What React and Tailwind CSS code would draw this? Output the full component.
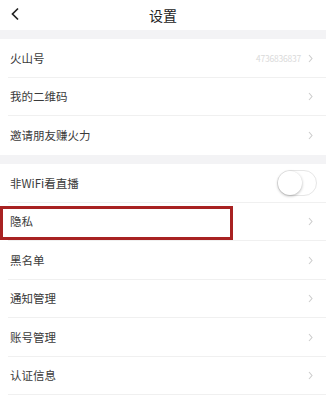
import React from "react";

const font = { fontFamily: '"Noto Sans CJK SC", "Noto Sans", sans-serif' };

const Chevron = () => (
  <svg width="5" height="9" viewBox="0 0 5 9" className="shrink-0">
    <path d="M1 1l3 3.5-3 3.5" fill="none" stroke="#cdcdcd" strokeWidth="1.1" />
  </svg>
);

const Row = ({ label, value, last, children, marked }) => (
  <div className="relative flex items-center h-[38.5px] pl-[10px] pr-[13px] bg-white">
    <span className="flex-1 text-[11.5px] text-[#3a3a3a]">{label}</span>
    {value && (
      <span className="mr-[7px] text-[8.5px] text-[#dadada] tracking-tight">{value}</span>
    )}
    {children || <Chevron />}
    {!last && <div className="absolute left-[8px] right-0 bottom-0 h-px bg-[#f0f0f0]" />}
    {marked && (
      <div className="absolute left-0 top-[3px] w-[233px] h-[34px] border-[3px] border-[#a82222]" />
    )}
  </div>
);

const Toggle = () => (
  <div className="relative w-[40px] h-[26px] rounded-full border border-[#e6e6e6] bg-white mr-[-4px]">
    <div className="absolute left-0 top-0 w-[24px] h-[24px] rounded-full bg-white shadow-[0_1px_3px_rgba(0,0,0,0.3)]" />
  </div>
);

const App = () => {
  return (
    <div className="w-[326px] h-[400px] overflow-hidden bg-white" style={font}>
      <div className="relative flex items-center justify-center h-[30px] bg-white">
        <svg width="10" height="14" viewBox="0 0 10 14" className="absolute left-[10px] top-[7px]">
          <path d="M8 1.5L2.5 7 8 12.5" fill="none" stroke="#222" strokeWidth="1.7" />
        </svg>
        <span className="text-[14px] text-[#222]">设置</span>
      </div>
      <div className="h-[9px] bg-[#f3f3f5]" />
      <Row label="火山号" value="4736836837" />
      <Row label="我的二维码" />
      <Row label="邀请朋友赚火力" last />
      <div className="h-[9.5px] bg-[#f3f3f5]" />
      <Row label="非WiFi看直播">
        <Toggle />
      </Row>
      <Row label="隐私" marked />
      <Row label="黑名单" />
      <Row label="通知管理" />
      <Row label="账号管理" />
      <Row label="认证信息" />
    </div>
  );
};

export default App;
